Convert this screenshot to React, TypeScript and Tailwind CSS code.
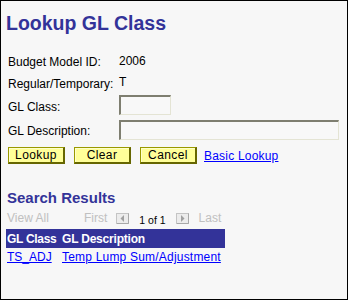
import React from "react";

function ArrowBox({ dir }: { dir: "left" | "right" }) {
  return (
    <svg width="13" height="11" viewBox="0 0 13 11" className="block">
      <rect x="0" y="0" width="13" height="11" fill="#d8d8d8" />
      <rect x="0.5" y="0.5" width="12" height="10" fill="none" stroke="#c4c4c4" />
      <path d="M1 10.5 H12.5 V0.5" fill="none" stroke="#a8a8a8" />
      <rect x="1" y="1" width="11" height="9" fill="#ececec" />
      {dir === "left" ? (
        <path d="M8 2 L8 9 L4.5 5.5 Z" fill="#a0a0a0" />
      ) : (
        <path d="M5 2 L5 9 L8.5 5.5 Z" fill="#a0a0a0" />
      )}
    </svg>
  );
}

function Btn({ label }: { label: string }) {
  return (
    <button className="w-[57px] h-[17px] bg-[#ffff99] border-t border-l border-r-2 border-b-2 border-t-[#999900] border-l-[#999900] border-r-[#666600] border-b-[#666600] shadow-[inset_1px_1px_0_#ffffcc] text-[12px] leading-[13px] tracking-[0.4px] text-black flex items-center justify-center p-0">
      {label}
    </button>
  );
}

export default function App() {
  return (
    <div className="w-[348px] h-[300px] border border-black bg-[#f7f7f7] font-['Liberation_Sans',Arial,sans-serif] text-[12px] leading-[14px] text-black overflow-hidden">
      <h1 className="ml-[5px] mt-[11px] text-[19.5px] leading-[22px] font-bold text-[#333399]">
        Lookup GL Class
      </h1>

      <div className="ml-[7px]">
        <div className="mt-[21px] h-[14px] flex">
          <div className="w-[111px]">Budget Model ID:</div>
          <div className="-mt-[1px]">2006</div>
        </div>
        <div className="mt-[8px] h-[14px] flex">
          <div className="w-[111px]">Regular/Temporary:</div>
          <div className="-mt-[2px]">T</div>
        </div>
        <div className="mt-[4px] h-[20px] flex">
          <div className="w-[111px] pt-[5px]">GL Class:</div>
          <div className="w-[52px] h-[20px] border-t-2 border-l-2 border-b border-r border-t-[#7e7e70] border-l-[#7e7e70] border-b-[#e4e4d4] border-r-[#e4e4d4] bg-[#f8f8f8]" />
        </div>
        <div className="mt-[5px] h-[20px] flex">
          <div className="w-[111px] pt-[4px]">GL Description:</div>
          <div className="w-[220px] h-[20px] border-t-2 border-l-2 border-b border-r border-t-[#7e7e70] border-l-[#7e7e70] border-b-[#e4e4d4] border-r-[#e4e4d4] bg-[#f8f8f8]" />
        </div>
        <div className="mt-[7px] h-[17px] flex items-center gap-[9px]">
          <Btn label="Lookup" />
          <Btn label="Clear" />
          <Btn label="Cancel" />
          <a href="#" className="-ml-[2px] text-[#0000ff] underline tracking-[0.2px]">
            Basic Lookup
          </a>
        </div>
      </div>

      <h2 className="ml-[6px] mt-[25px] text-[15px] leading-[18px] font-bold text-[#333399]">
        Search Results
      </h2>

      <div className="ml-[6px] mt-[4px] h-[14px] flex items-center text-[#c0c0c0]">
        <span className="w-[77px]">View All</span>
        <span>First</span>
        <span className="ml-[9px]">
          <ArrowBox dir="left" />
        </span>
        <span className="ml-[10px] text-[10.5px] text-black mt-[3px]">1 of 1</span>
        <span className="ml-[10px]">
          <ArrowBox dir="right" />
        </span>
        <span className="ml-[10px]">Last</span>
      </div>

      <div className="ml-[5px] mt-[4px] w-[219px]">
        <div className="h-[19px] bg-[#333399] text-white font-bold flex items-center text-[12px]">
          <div className="w-[55px] pl-[1px] tracking-[-0.3px]">GL Class</div>
          <div className="pl-[1px] tracking-[-0.2px]">GL Description</div>
        </div>
        <div className="h-[18px] pt-[2px] flex">
          <div className="w-[55px] pl-[1px]">
            <a href="#" className="text-[#0000ff] underline">TS_ADJ</a>
          </div>
          <div className="pl-[1px]">
            <a href="#" className="text-[#0000ff] underline tracking-[0.2px]">Temp Lump Sum/Adjustment</a>
          </div>
        </div>
      </div>
    </div>
  );
}
